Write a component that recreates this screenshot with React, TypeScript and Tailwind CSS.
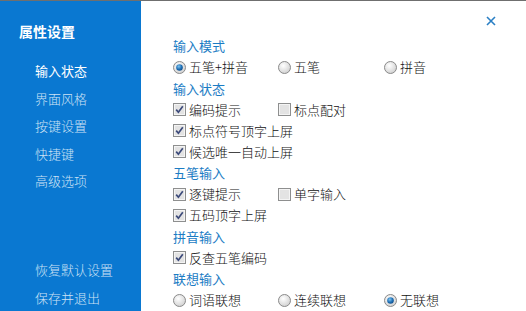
import React from "react";

const font = { fontFamily: '"Noto Sans CJK SC", "Noto Sans", sans-serif' };

function Radio({ checked }: { checked?: boolean }) {
  return (
    <svg width="13" height="13" viewBox="0 0 13 13" className="shrink-0">
      <defs>
        <radialGradient id={checked ? "rg1" : "rg0"} cx="0.4" cy="0.35" r="0.7">
          <stop offset="0" stopColor="#ffffff" />
          <stop offset="1" stopColor="#cfcfcf" />
        </radialGradient>
        <radialGradient id="dot" cx="0.4" cy="0.35" r="0.7">
          <stop offset="0" stopColor="#7ec4f0" />
          <stop offset="0.6" stopColor="#1f6fb5" />
          <stop offset="1" stopColor="#0d4a86" />
        </radialGradient>
      </defs>
      <circle cx="6.5" cy="6.5" r="6" fill={`url(#${checked ? "rg1" : "rg0"})`} stroke="#8a8a8a" />
      {checked && <circle cx="6.5" cy="6.5" r="3.3" fill="url(#dot)" />}
    </svg>
  );
}

function Check({ checked }: { checked?: boolean }) {
  return (
    <svg width="13" height="13" viewBox="0 0 13 13" className="shrink-0">
      <rect x="0.5" y="0.5" width="12" height="12" fill="#f4f4f4" stroke="#8e8f8f" />
      <rect x="2" y="2" width="9" height="9" fill="#e3e3e3" />
      {checked && <path d="M3.2 6.6 L5.4 9.2 L9.8 3.2" fill="none" stroke="#3c4a7a" strokeWidth="1.7" />}
    </svg>
  );
}

function Opt({ kind, checked, label, w }: { kind: "r" | "c"; checked?: boolean; label: string; w?: string }) {
  return (
    <div className={`flex items-center gap-[3px] ${w ?? ""}`}>
      {kind === "r" ? <Radio checked={checked} /> : <Check checked={checked} />}
      <span>{label}</span>
    </div>
  );
}

function Head({ children }: { children: React.ReactNode }) {
  return <div className="h-[21px] mt-[0.5px] flex items-center text-[#1b7cc4] font-normal">{children}</div>;
}

function Row({ children }: { children: React.ReactNode }) {
  return <div className="h-[21px] flex items-center">{children}</div>;
}

export default function App() {
  const nav = ["输入状态", "界面风格", "按键设置", "快捷键", "高级选项"];
  return (
    <div className="w-[526px] h-[311px] flex flex-col overflow-hidden bg-white text-[13px] font-light" style={font}>
      <div className="h-[1px] bg-[#6f6f6f] shrink-0" />
      <div className="flex flex-1 min-h-0">
        <aside className="w-[141px] bg-[#0a78d1] flex flex-col shrink-0">
          <div className="pl-[19px] pt-[20px] text-[14px] font-bold text-white h-[56px]">属性设置</div>
          <div className="pl-[35px] flex flex-col text-[#cde2f5]">
            {nav.map((n, i) => (
              <div key={n} className={`h-[27.5px] flex items-center ${i === 0 ? "text-white font-normal" : ""}`}>
                {n}
              </div>
            ))}
          </div>
          <div className="mt-auto pl-[35px] flex flex-col text-[#cde2f5]">
            <div className="h-[28px] flex items-center">恢复默认设置</div>
            <div className="h-[27px] flex items-center">保存并退出</div>
          </div>
        </aside>
        <main className="flex-1 relative pl-[32px] pt-[34px] text-[#111]">
          <button className="absolute left-[345px] top-[15px]">
            <svg width="10" height="10" viewBox="0 0 10 10">
              <path d="M1 1 L9 9 M9 1 L1 9" stroke="#2a7fc4" strokeWidth="1.6" />
            </svg>
          </button>
          <Head>输入模式</Head>
          <Row>
            <Opt kind="r" checked label="五笔+拼音" w="w-[105px]" />
            <Opt kind="r" label="五笔" w="w-[106px]" />
            <Opt kind="r" label="拼音" />
          </Row>
          <Head>输入状态</Head>
          <Row>
            <Opt kind="c" checked label="编码提示" w="w-[105px]" />
            <Opt kind="c" label="标点配对" />
          </Row>
          <Row>
            <Opt kind="c" checked label="标点符号顶字上屏" />
          </Row>
          <Row>
            <Opt kind="c" checked label="候选唯一自动上屏" />
          </Row>
          <Head>五笔输入</Head>
          <Row>
            <Opt kind="c" checked label="逐键提示" w="w-[105px]" />
            <Opt kind="c" label="单字输入" />
          </Row>
          <Row>
            <Opt kind="c" checked label="五码顶字上屏" />
          </Row>
          <Head>拼音输入</Head>
          <Row>
            <Opt kind="c" checked label="反查五笔编码" />
          </Row>
          <Head>联想输入</Head>
          <Row>
            <Opt kind="r" label="词语联想" w="w-[105px]" />
            <Opt kind="r" label="连续联想" w="w-[106px]" />
            <Opt kind="r" checked label="无联想" />
          </Row>
        </main>
      </div>
    </div>
  );
}
